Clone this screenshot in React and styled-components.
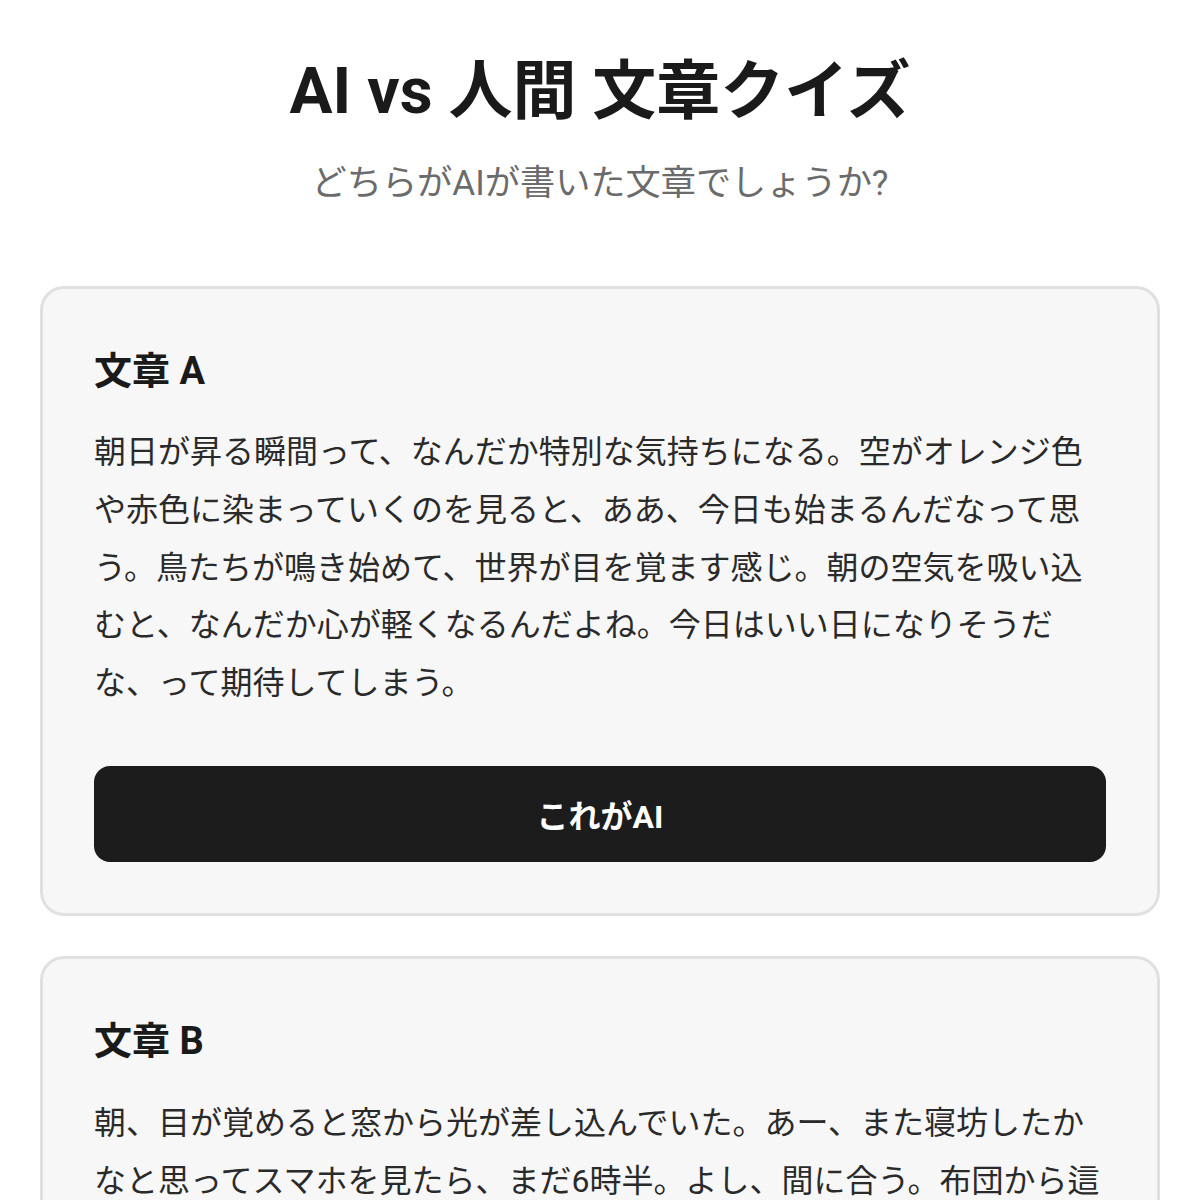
import styled, { createGlobalStyle } from "styled-components";

const GlobalStyle = createGlobalStyle`
  body {
    margin: 0;
    background: #ffffff;
    font-family: Roboto, "Noto Sans CJK JP", sans-serif;
    color: #1a1a1a;
  }
`;

const Page = styled.main`
  max-width: 1120px;
  margin: 0 auto;
  padding: 54px 40px 40px;
`;

const Header = styled.header`
  text-align: center;
  margin-bottom: 76px;
`;

const Title = styled.h1`
  margin: 0;
  font-size: 64px;
  line-height: 1.2;
  font-weight: 700;
  color: #1a1a1a;
`;

const Subtitle = styled.p`
  margin: 26px 0 0;
  font-size: 35.2px;
  line-height: 1.5;
  color: #6b6b6b;
`;

const Card = styled.section`
  background: #f7f7f7;
  border: 3px solid #e0e0e0;
  border-radius: 24px;
  padding: 53px 51px 51px;
  margin-bottom: 40px;
`;

const CardTitle = styled.h2`
  margin: 0 0 24px;
  font-size: 38px;
  line-height: 1.55;
  font-weight: 700;
  color: #1a1a1a;
`;

const Passage = styled.p`
  margin: 0 0 54px;
  font-size: 32px;
  line-height: 1.8;
  color: #2a2a2a;
`;

const ChoiceButton = styled.button`
  display: block;
  width: 100%;
  height: 96px;
  border: 0;
  border-radius: 16px;
  background: #1c1c1c;
  color: #ffffff;
  font-family: inherit;
  font-size: 32px;
  font-weight: 700;
  cursor: pointer;
`;

const passages = [
  {
    label: "A",
    text: "朝日が昇る瞬間って、なんだか特別な気持ちになる。空がオレンジ色や赤色に染まっていくのを見ると、ああ、今日も始まるんだなって思う。鳥たちが鳴き始めて、世界が目を覚ます感じ。朝の空気を吸い込むと、なんだか心が軽くなるんだよね。今日はいい日になりそうだな、って期待してしまう。",
  },
  {
    label: "B",
    text: "朝、目が覚めると窓から光が差し込んでいた。あー、また寝坊したかなと思ってスマホを見たら、まだ6時半。よし、間に合う。布団から這い出して、カーテンを開けると、外はすっかり明るくなっていた。顔を洗って、コーヒーを淹れて、のんびり朝ごはんを食べる。たまにはこんな朝もいいな。",
  },
];

export default function App() {
  return (
    <>
      <GlobalStyle />
      <Page>
        <Header>
          <Title>AI vs 人間 文章クイズ</Title>
          <Subtitle>どちらがAIが書いた文章でしょうか?</Subtitle>
        </Header>
        {passages.map((p) => (
          <Card key={p.label}>
            <CardTitle>文章 {p.label}</CardTitle>
            <Passage>{p.text}</Passage>
            <ChoiceButton>これがAI</ChoiceButton>
          </Card>
        ))}
      </Page>
    </>
  );
}
